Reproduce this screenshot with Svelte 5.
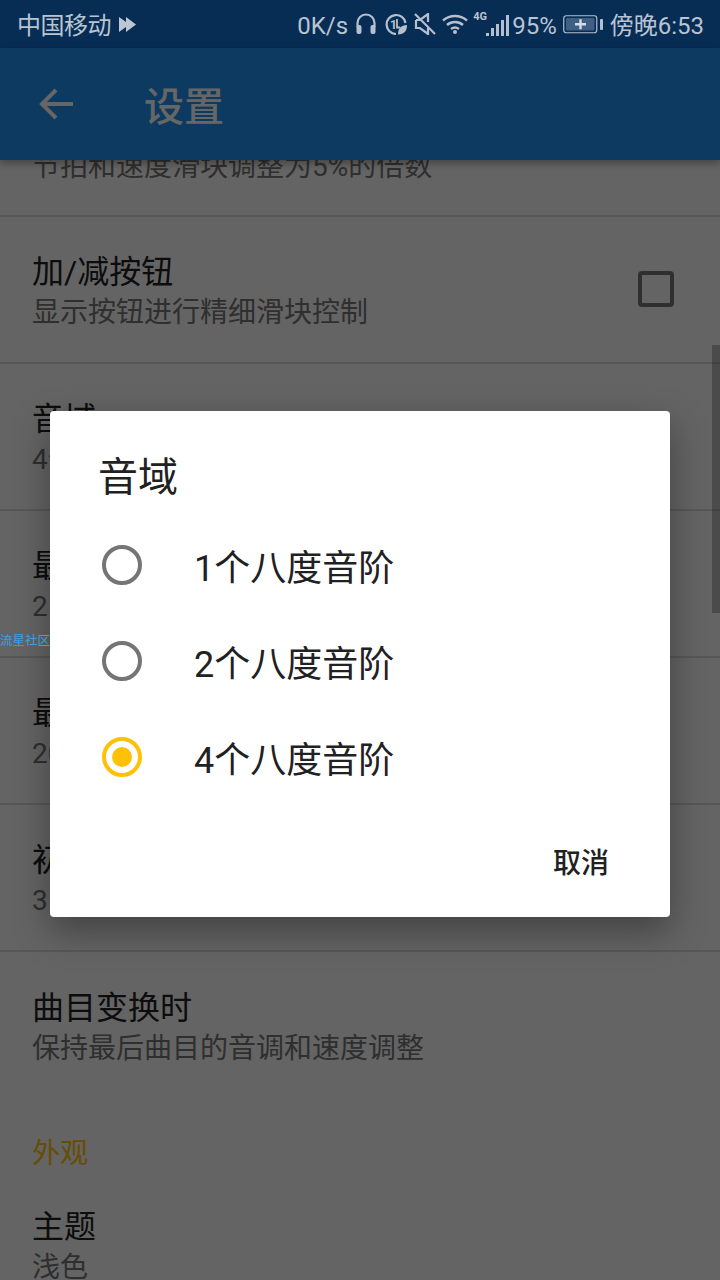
<script>
	const rows = [
		{ title: '加/减按钮', sub: '显示按钮进行精细滑块控制', check: true },
		{ title: '音域', sub: '4个八度音阶' },
		{ title: '最低音调', sub: '25%' },
		{ title: '最高音调', sub: '200%' },
		{ title: '初始速度', sub: '35%' }
	];
	const options = [
		{ label: '1个八度音阶', on: false },
		{ label: '2个八度音阶', on: false },
		{ label: '4个八度音阶', on: true }
	];
</script>

<div class="screen">
	<header class="status">
		<div class="status-left">
			<span class="carrier">中国移动</span>
			<svg class="play" width="17" height="17" viewBox="0 0 17 17">
				<path d="M0 1l7 5V1l10 7.500L7 16v-5l-7 5z" fill="#bcc7d4" />
			</svg>
		</div>
		<div class="status-right">
			<span class="speed">0K/s</span>
			<svg class="ic" width="22" height="22" viewBox="0 0 22 22" fill="none" stroke="#b4c0cf" stroke-width="2.200">
				<path d="M2.500 14V10a8.500 8.500 0 0 1 17 0v4" />
				<rect x="1.500" y="12" width="5" height="9" rx="2" fill="#b4c0cf" stroke="none" />
				<rect x="15.500" y="12" width="5" height="9" rx="2" fill="#b4c0cf" stroke="none" />
			</svg>
			<svg class="ic clock-ic" width="22" height="22" viewBox="0 0 22 22" fill="none" stroke="#b4c0cf" stroke-width="2.200">
				<path d="M20.500 10a9.500 9.500 0 1 0-9.500 11" />
				<text x="5" y="15.500" font-size="12" font-weight="700" fill="#b4c0cf" stroke="none" font-family="Roboto">1</text>
				<path d="M12 6v8.500h3" stroke-width="1.800" />
				<path d="M13 21.500c0-6 3-9.500 9-9.500 0 6-3 9.500-9 9.500z" fill="#b4c0cf" stroke="none" />
			</svg>
			<svg class="ic mute-ic" width="22" height="22" viewBox="0 0 22 22" fill="none" stroke="#b4c0cf" stroke-width="2.200">
				<path d="M2 7v8h4l8 6v-6" />
				<path d="M2 7h4l8-6v8" />
				<path d="M1 1l20 20" />
			</svg>
			<svg class="ic wifi" width="26" height="20" viewBox="0 0 26 20" fill="none" stroke="#b4c0cf" stroke-width="2.400">
				<path d="M1 6.500c7-6 17-6 24 0M5 11c4.500-4 11.500-4 16 0M9 15c2.500-2 5.500-2 8 0" />
				<circle cx="13" cy="18" r="2" fill="#b4c0cf" stroke="none" />
			</svg>
			<div class="signal">
				<span class="net">4G</span>
				<i class="b1"></i><i class="b2"></i><i class="b3"></i><i class="b4"></i><i class="b5"></i>
			</div>
			<span class="pct">95%</span>
			<svg class="battery" width="40" height="20" viewBox="0 0 40 20">
				<rect x="0.750" y="1.750" width="33" height="17" rx="2.500" fill="none" stroke="#b4c0cf" stroke-width="1.200" />
				<rect x="3" y="4" width="28.500" height="12.500" rx="1" fill="#3f5f84" />
				<path d="M12 10.200h11M17.500 5.200v10" stroke="#d5dde6" stroke-width="2.400" />
				<rect x="37" y="5" width="3" height="11" rx="1" fill="#b4c0cf" />
			</svg>
			<span class="clock">傍晚6:53</span>
		</div>
	</header>

	<div class="toolbar">
		<svg width="36" height="32" viewBox="0 0 36 32" fill="none" stroke="#fff" stroke-width="4">
			<path d="M34 16H4M17 2L3 16l14 14" />
		</svg>
		<span class="toolbar-title">设置</span>
	</div>

	<main class="list">
		<div class="row cut"><span class="sub">节拍和速度滑块调整为5%的倍数</span></div>
		{#each rows as row}
			<div class="row">
				<div class="row-text">
					<span class="title">{row.title}</span>
					<span class="sub">{row.sub}</span>
				</div>
				{#if row.check}
					<span class="check"></span>
				{/if}
			</div>
		{/each}
		<div class="row last">
			<div class="row-text">
				<span class="title">曲目变换时</span>
				<span class="sub">保持最后曲目的音调和速度调整</span>
			</div>
		</div>
		<div class="section">外观</div>
		<div class="row-text theme">
			<span class="title">主题</span>
			<span class="sub">浅色</span>
		</div>
	</main>

	<div class="scrollbar"></div>

	<div class="scrim">
		<div class="dialog">
			<h2>音域</h2>
			{#each options as opt}
				<div class="option">
					<span class="radio" class:on={opt.on}></span>
					<span>{opt.label}</span>
				</div>
			{/each}
			<div class="actions"><span>取消</span></div>
		</div>
	</div>

	<span class="watermark">流星社区</span>
</div>

<style>
	:global(body) {
		margin: 0;
	}
	.screen {
		position: relative;
		width: 720px;
		height: 1280px;
		overflow: hidden;
		background: #fafafa;
		font-family: Roboto, "Noto Sans CJK SC", sans-serif;
		color: #212121;
	}
	.status {
		height: 48px;
		background: #082d55;
		color: #b8c4d2;
		font-size: 24px;
		display: flex;
		justify-content: space-between;
		align-items: center;
		padding: 0 16px 0 17px;
		box-sizing: border-box;
	}
	.status-left,
	.status-right {
		display: flex;
		align-items: center;
	}
	.carrier,
	.clock {
		padding-bottom: 2px;
	}
	.speed,
	.pct {
		padding-top: 3px;
	}
	.carrier {
		letter-spacing: -0.5px;
	}
	.play {
		margin-left: 8px;
	}
	.speed {
		margin-right: 7px;
	}
	.ic {
		margin-right: 8px;
	}
	.ic.clock-ic {
		margin-right: 7px;
	}
	.ic.mute-ic {
		margin-right: 6px;
	}
	.ic.wifi {
		margin-right: 5px;
	}
	.signal {
		position: relative;
		width: 36px;
		height: 24px;
		display: flex;
		align-items: flex-end;
		justify-content: flex-end;
		gap: 1.500px;
	}
	.net {
		position: absolute;
		left: 0;
		top: -1px;
		font-size: 11px;
		font-weight: 700;
		line-height: 12px;
	}
	.signal i {
		width: 3.500px;
		background: #b4c0cf;
	}
	.b1 { height: 3px; }
	.b2 { height: 8px; }
	.b3 { height: 12px; }
	.b4 { height: 16px; }
	.b5 { height: 21px; }
	.pct {
		margin: 0 6px 0 3px;
	}
	.battery {
		margin-right: 7px;
	}
	.toolbar {
		height: 112px;
		background: #1e91f0;
		display: flex;
		align-items: center;
		padding-left: 39px;
		position: relative;
		z-index: 1;
		box-shadow: 0 3px 8px rgba(0, 0, 0, 0.35);
	}
	.toolbar-title {
		margin-left: 69px;
		font-size: 40px;
		font-weight: 500;
		color: #fff;
	}
	.row {
		height: 147px;
		box-sizing: border-box;
		border-bottom: 2px solid #d9d9d9;
		padding: 0 46px 0 32px;
		display: flex;
		align-items: center;
		justify-content: space-between;
	}
	.row.cut {
		height: 57px;
		align-items: flex-end;
		padding-bottom: 29px;
	}
	.row.cut .sub {
		height: 38px;
		flex: none;
	}
	.row.last {
		border-bottom: 0;
	}
	.row-text {
		display: flex;
		flex-direction: column;
		gap: 3px;
		padding-top: 6px;
	}
	.title {
		font-size: 32px;
		line-height: 38px;
	}
	.sub {
		font-size: 28px;
		line-height: 38px;
		color: #757575;
	}
	.check {
		width: 28px;
		height: 28px;
		border: 4px solid #757575;
		border-radius: 4px;
		margin-bottom: 2px;
	}
	.section {
		margin-top: 36px;
		padding-left: 32px;
		font-size: 28px;
		line-height: 38px;
		color: #ffc107;
	}
	.theme {
		padding: 35px 32px 0;
	}
	.scrollbar {
		position: absolute;
		right: 0;
		top: 345px;
		width: 8px;
		height: 268px;
		background: rgba(0, 0, 0, 0.25);
	}
	.scrim {
		position: absolute;
		inset: 48px 0 0;
		z-index: 2;
		background: rgba(0, 0, 0, 0.6);
		display: flex;
		align-items: center;
		justify-content: center;
	}
	.dialog {
		width: 620px;
		height: 506px;
		box-sizing: border-box;
		background: #fff;
		border-radius: 4px;
		box-shadow: 0 14px 36px rgba(0, 0, 0, 0.35);
		padding: 42px 0 0 52px;
		display: flex;
		flex-direction: column;
	}
	h2 {
		margin: 0 0 14px -4px;
		font-size: 40px;
		font-weight: 400;
		line-height: 50px;
		color: #212121;
	}
	.option {
		height: 96px;
		display: flex;
		align-items: center;
		gap: 52px;
		font-size: 36px;
		color: #212121;
	}
	.radio {
		width: 40px;
		height: 40px;
		box-sizing: border-box;
		border: 4px solid #757575;
		border-radius: 50%;
		display: flex;
		align-items: center;
		justify-content: center;
	}
	.radio.on {
		border-color: #ffc107;
	}
	.radio.on::after {
		content: '';
		width: 20px;
		height: 20px;
		border-radius: 50%;
		background: #ffc107;
	}
	.actions {
		margin-top: auto;
		padding: 0 61px 36px 0;
		display: flex;
		justify-content: flex-end;
		font-size: 28px;
		font-weight: 500;
		color: #212121;
	}
	.watermark {
		position: absolute;
		left: 0;
		top: 633px;
		white-space: nowrap;
		font-size: 12.500px;
		line-height: 16px;
		color: #3c9fe6;
		z-index: 3;
	}
</style>
